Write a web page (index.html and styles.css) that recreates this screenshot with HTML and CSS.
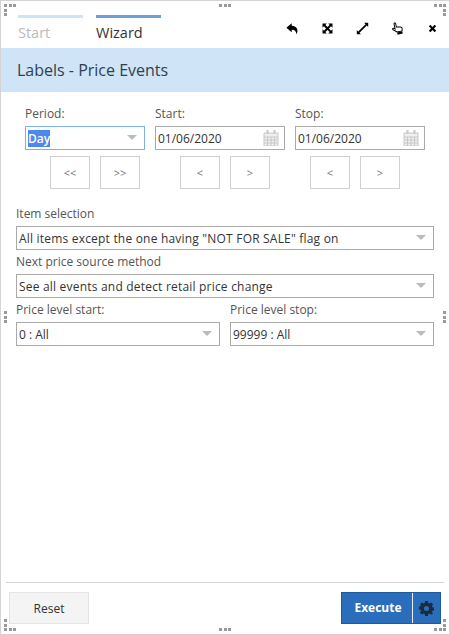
FILE: index.html
```html
<!DOCTYPE html>
<html lang="en">
<head>
  <meta charset="UTF-8">
  <title>Labels - Price Events</title>
  <link rel="stylesheet" href="styles.css">
</head>
<body>
  <div class="window">
    <span class="grip grip-tl"><i></i><i></i><i></i><i></i><i></i></span>
    <span class="grip grip-tr"><i></i><i></i><i></i><i></i><i></i></span>
    <span class="grip grip-bl"><i></i><i></i><i></i><i></i><i></i></span>
    <span class="grip grip-br"><i></i><i></i><i></i><i></i><i></i></span>
    <span class="grip grip-top"><i></i><i></i><i></i></span>
    <span class="grip grip-bottom"><i></i><i></i><i></i></span>
    <span class="grip grip-left"><i></i><i></i><i></i></span>
    <span class="grip grip-right"><i></i><i></i><i></i></span>

    <div class="topbar">
      <div class="tab tab-start">Start</div>
      <div class="tab tab-wizard">Wizard</div>
      <div class="tools">
        <svg class="tool" viewBox="0 0 16 16"><path d="M7 1.500 .5 7 7 12.500V9.500c3.500 0 5.500 1.500 6 5.500 2.500-5 1-10-6-10.500z"/></svg>
        <svg class="tool" viewBox="0 0 16 16"><path transform="translate(1 1) scale(.875)" d="M1 1h6L5 3l3 3 3-3-2-2h6v6l-2-2-3 3 3 3 2-2v6H9l2-2-3-3-3 3 2 2H1V9l2 2 3-3-3-3-2 2z"/></svg>
        <svg class="tool" viewBox="0 0 16 16"><path d="M10 1h5v5l-1.700-1.700-9 9L6 15H1v-5l1.700 1.700 9-9z"/></svg>
        <svg class="tool" viewBox="0 0 16 16"><g transform="rotate(-12 8 8)"><path d="M5 1.500C5 .5 7 .5 7 1.500V6l5 1c1.500.5 2 1.500 1.500 3l-.7 2H6.500L2 8c-.5-1 1-2 2-1l1 1z" fill="#fff" stroke="#000" stroke-width="1.200"/><path d="M6.500 12.600H13v2.900H6.500z"/></g></svg>
        <svg class="tool" viewBox="0 0 16 16"><path transform="translate(2 2) scale(.75)" d="M4.500 2 8 5.500 11.500 2 14 4.500 10.500 8l3.500 3.500-2.500 2.500L8 10.500 4.500 14 2 11.500 5.500 8 2 4.500z"/></svg>
      </div>
    </div>

    <h1 class="title">Labels - Price Events</h1>

    <div class="period-row">
      <div class="period-col">
        <label class="field-label">Period:</label>
        <div class="select select-focus"><span class="selected-text">Day</span><b class="caret"></b></div>
        <div class="nav-group nav-period">
          <button class="nav-btn">&lt;&lt;</button>
          <button class="nav-btn">&gt;&gt;</button>
        </div>
      </div>
      <div class="date-col">
        <label class="field-label">Start:</label>
        <div class="date-input">
          <span>01/06/2020</span>
          <svg class="calendar" viewBox="0 0 16 16"><path d="M1 3h14v13H1z" fill="#efefef" stroke="#c8c8c8"/><path d="M1 7h14M1 10h14M1 13h14M4.500 7v9M8 7v9M11.500 7v9" stroke="#c8c8c8" fill="none"/><path d="M3.500 0h2v4h-2zM10.500 0h2v4h-2z" fill="#c8c8c8"/></svg>
        </div>
        <div class="nav-group nav-start">
          <button class="nav-btn">&lt;</button>
          <button class="nav-btn">&gt;</button>
        </div>
      </div>
      <div class="date-col">
        <label class="field-label">Stop:</label>
        <div class="date-input">
          <span>01/06/2020</span>
          <svg class="calendar" viewBox="0 0 16 16"><path d="M1 3h14v13H1z" fill="#efefef" stroke="#c8c8c8"/><path d="M1 7h14M1 10h14M1 13h14M4.500 7v9M8 7v9M11.500 7v9" stroke="#c8c8c8" fill="none"/><path d="M3.500 0h2v4h-2zM10.500 0h2v4h-2z" fill="#c8c8c8"/></svg>
        </div>
        <div class="nav-group nav-stop">
          <button class="nav-btn">&lt;</button>
          <button class="nav-btn">&gt;</button>
        </div>
      </div>
    </div>

    <div class="options">
      <label class="field-label">Item selection</label>
      <div class="select select-long"><span>All items except the one having "NOT FOR SALE" flag on</span><b class="caret"></b></div>
      <label class="field-label">Next price source method</label>
      <div class="select select-long"><span>See all events and detect retail price change</span><b class="caret"></b></div>
      <div class="level-row">
        <div class="level-col">
          <label class="field-label">Price level start:</label>
          <div class="select"><span>0 : All</span><b class="caret"></b></div>
        </div>
        <div class="level-col">
          <label class="field-label">Price level stop:</label>
          <div class="select"><span>99999 : All</span><b class="caret"></b></div>
        </div>
      </div>
    </div>

    <div class="footer">
      <button class="reset-btn">Reset</button>
      <div class="execute-btn">
        <span class="execute-text">Execute</span>
        <span class="execute-gear">
          <svg viewBox="0 0 16 16" width="15" height="15"><path fill-rule="evenodd" d="M6.500 0h3l.4 2.200 1.300.5L13 1.500 15 3.600l-1.200 1.800.5 1.200 2 .4v3l-2 .4-.5 1.300 1.200 1.800L13 14.500l-1.800-1.200-1.300.5-.4 2.200h-3l-.4-2.200-1.300-.5L3 14.500 1 12.500l1.200-1.800-.5-1.300-2-.4V6l2-.4.5-1.200L1 3.600l2-2.100 1.800 1.200 1.300-.5zM8 5.300a2.700 2.700 0 1 0 0 5.400 2.700 2.700 0 0 0 0-5.400z"/></svg>
        </span>
      </div>
    </div>
  </div>
</body>
</html>
```

FILE: styles.css
```css
* {
  box-sizing: border-box;
}

body {
  margin: 0;
  background-color: #fff;
  color: #333;
  font-family: "Open Sans", sans-serif;
  font-size: 12px;
}

.window {
  position: relative;
  display: flex;
  flex-direction: column;
  width: 450px;
  height: 635px;
  border: 1px solid #d4d4d4;
  overflow: hidden;
}

/* resize grips */
.grip {
  position: absolute;
  display: grid;
  grid-template-columns: repeat(3, 3px);
  grid-auto-rows: 3px;
  gap: 1.5px;
}

.grip i {
  background-color: #999;
}

.grip-tl { left: 3px; top: 3px; }
.grip-tr { right: 3px; top: 3px; }
.grip-bl { left: 3px; bottom: 3px; }
.grip-br { right: 3px; bottom: 3px; }
.grip-top { left: 218px; top: 3px; }
.grip-bottom { left: 218px; bottom: 3px; }
.grip-left { left: 3px; top: 310px; grid-template-columns: 3px; }
.grip-right { right: 3px; top: 310px; grid-template-columns: 3px; }

.grip-tl i:nth-child(4) { grid-column: 1; }
.grip-tl i:nth-child(5) { grid-column: 1; }
.grip-tr i:nth-child(4) { grid-column: 3; }
.grip-tr i:nth-child(5) { grid-column: 3; }
.grip-bl i:nth-child(1) { grid-column: 1; grid-row: 1; }
.grip-bl i:nth-child(2) { grid-column: 1; grid-row: 2; }
.grip-bl i:nth-child(3) { grid-column: 1; grid-row: 3; }
.grip-bl i:nth-child(4) { grid-column: 2; grid-row: 3; }
.grip-bl i:nth-child(5) { grid-column: 3; grid-row: 3; }
.grip-br i:nth-child(1) { grid-column: 3; grid-row: 1; }
.grip-br i:nth-child(2) { grid-column: 3; grid-row: 2; }
.grip-br i:nth-child(3) { grid-column: 3; grid-row: 3; }
.grip-br i:nth-child(4) { grid-column: 2; grid-row: 3; }
.grip-br i:nth-child(5) { grid-column: 1; grid-row: 3; }

/* top tabs and tools */
.topbar {
  display: flex;
  height: 47px;
  padding: 14px 0 0 17px;
}

.tab {
  width: 65px;
  margin-right: 13px;
  padding-top: 5px;
  border-top: 3px solid #d0e4f7;
  font-size: 14.5px;
  line-height: 19px;
}

.tab-start {
  color: #bbb;
}

.tab-wizard {
  border-top-color: #6f9fd8;
  color: #333;
}

.tools {
  display: flex;
  align-items: center;
  gap: 22px;
  height: 26px;
  margin-left: 112px;
}

.tool {
  width: 13px;
  height: 13px;
}

.title {
  margin: 0;
  height: 44px;
  padding-left: 16px;
  background-color: #d0e4f7;
  color: #2f3f50;
  font-size: 16px;
  font-weight: 400;
  line-height: 44px;
}

/* period row */
.field-label {
  display: block;
  height: 20px;
  color: #555;
  font-size: 12px;
  line-height: 16px;
}

.period-row {
  display: flex;
  gap: 10px;
  padding: 14px 0 0 24px;
}

.period-col {
  width: 120px;
}

.date-col {
  width: 130px;
}

.select,
.date-input {
  position: relative;
  display: flex;
  align-items: center;
  height: 24px;
  padding-left: 2px;
  border: 1px solid #aaa;
  background-color: #fff;
  font-size: 12px;
  white-space: nowrap;
}

.select-long {
  letter-spacing: 0.2px;
}

.select-focus {
  border-color: #7fb0e8;
}

.selected-text {
  background-color: #4d88ee;
  color: #fff;
  font-weight: 600;
  line-height: 17px;
}

.caret {
  position: absolute;
  right: 7px;
  top: 8px;
  border-left: 5px solid transparent;
  border-right: 5px solid transparent;
  border-top: 5px solid #bbb;
}

.calendar {
  position: absolute;
  right: 5px;
  top: 3px;
  width: 16px;
  height: 16px;
}

.nav-group {
  display: flex;
  gap: 10px;
  margin-top: 6px;
}

.nav-period { padding-left: 25px; }
.nav-start { padding-left: 25px; }
.nav-stop { padding-left: 15px; }

.nav-btn {
  width: 40px;
  height: 33px;
  padding: 0;
  border: 1px solid #d0d0d0;
  background-color: #fff;
  color: #777;
  font-family: inherit;
  font-size: 11px;
}

/* item options */
.options {
  padding: 17px 15px 0;
}

.options > .select {
  margin-bottom: 4px;
}

.level-row {
  display: flex;
  gap: 10px;
}

.level-col {
  flex: 1;
}

/* footer */
.footer {
  display: flex;
  align-items: flex-start;
  justify-content: space-between;
  height: 52px;
  margin: auto 5px 0;
  padding: 9px 3px 0;
  border-top: 1px solid #d4d4d4;
}

.reset-btn {
  width: 80px;
  height: 32px;
  padding: 0;
  border: 1px solid #e4e4e4;
  background-color: #f4f4f4;
  color: #333;
  font-family: inherit;
  font-size: 12px;
  font-weight: 500;
}

.execute-btn {
  display: flex;
  align-items: stretch;
  width: 100px;
  height: 32px;
  border: 1px solid #1f5a9e;
  background-color: #2a6ebb;
}

.execute-text {
  flex: 1;
  padding-left: 2px;
  border-right: 1px solid #e8eef6;
  color: #fff;
  font-size: 12px;
  font-weight: 700;
  line-height: 30px;
  text-align: center;
}

.execute-gear {
  display: flex;
  align-items: center;
  justify-content: center;
  width: 27px;
  color: #1c2c40;
}

.execute-gear svg {
  fill: currentColor;
}
```
